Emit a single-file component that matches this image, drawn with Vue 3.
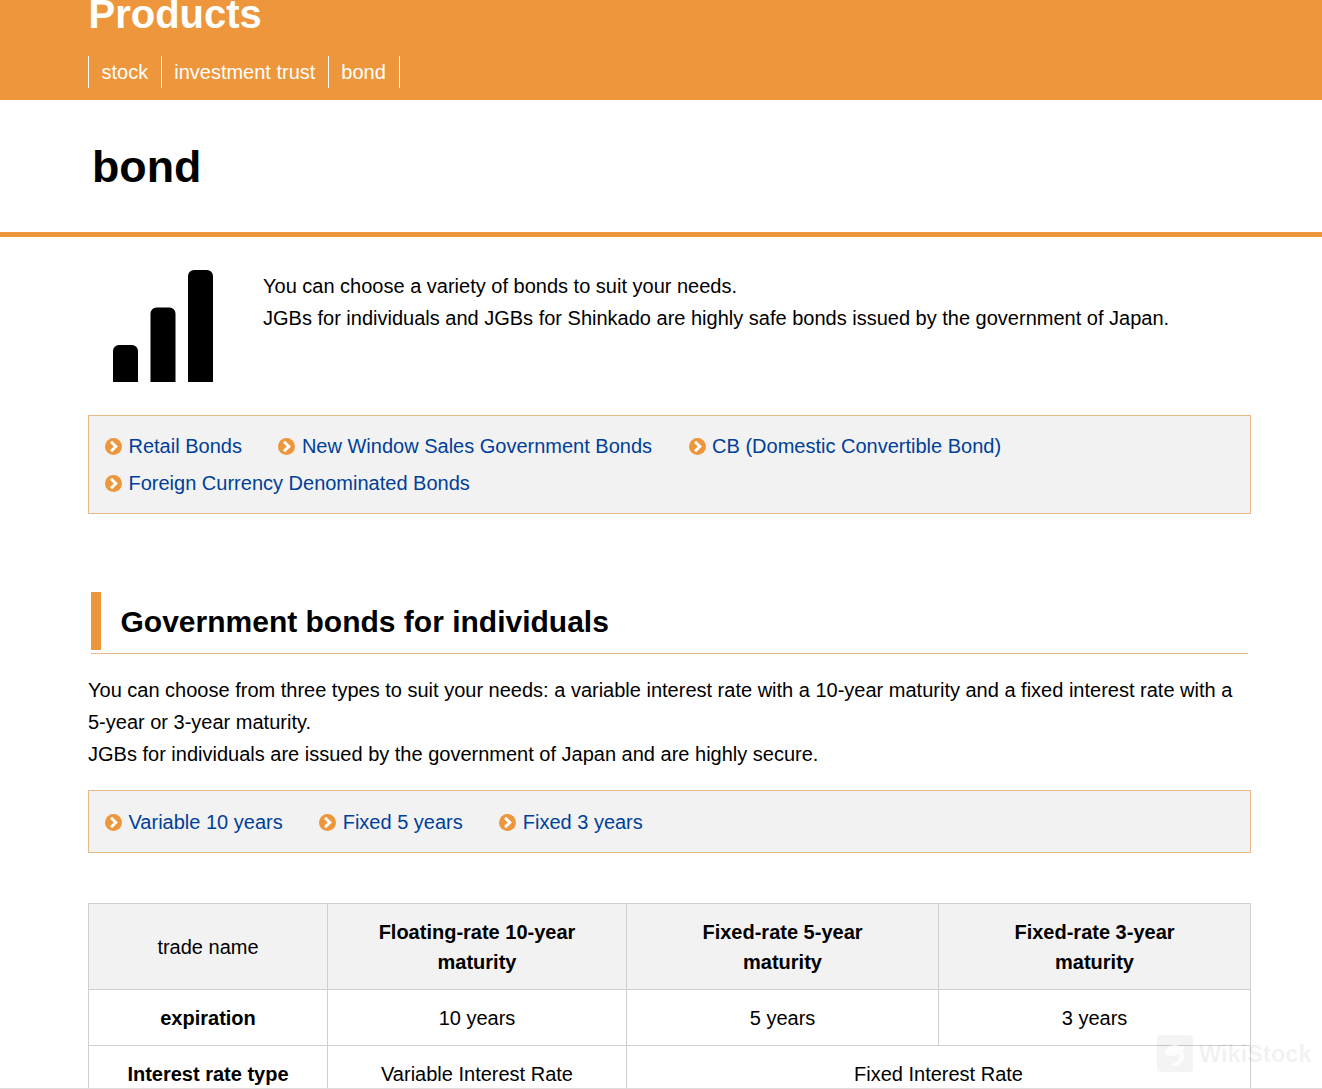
<script setup>
const topLinks = ['stock', 'investment trust', 'bond']
const mainLinks = ['Retail Bonds', 'New Window Sales Government Bonds', 'CB (Domestic Convertible Bond)', 'Foreign Currency Denominated Bonds']
const subLinks = ['Variable 10 years', 'Fixed 5 years', 'Fixed 3 years']
</script>

<template>
  <div class="page">
    <header class="band">
      <div class="band-title">Products</div>
      <ul class="top-nav">
        <li v-for="l in topLinks" :key="l">{{ l }}</li>
      </ul>
    </header>
    <section class="title-row"><h1>bond</h1></section>
    <main class="content">
      <div class="intro">
        <div class="bars" aria-hidden="true">
          <svg width="100" height="112" viewBox="0 0 100 112">
            <path d="M0 112V81a6 6 0 0 1 6-6h13a6 6 0 0 1 6 6v31zM37.500 112V43.500a6 6 0 0 1 6-6h13a6 6 0 0 1 6 6V112zM75 112V6a6 6 0 0 1 6-6h13a6 6 0 0 1 6 6v106z" fill="#000"/>
          </svg>
        </div>
        <p>You can choose a variety of bonds to suit your needs.<br>JGBs for individuals and JGBs for Shinkado are highly safe bonds issued by the government of Japan.</p>
      </div>
      <ul class="link-box first">
        <li v-for="l in mainLinks" :key="l">
          <svg class="arrow" width="17" height="17" viewBox="0 0 17 17"><circle cx="8.500" cy="8.500" r="8.500" fill="#ed963b"/><path d="M6 3.700l4.800 4.800-4.800 4.800" fill="none" stroke="#fff" stroke-width="3"/></svg>
          <a>{{ l }}</a>
        </li>
      </ul>
      <h2><span>Government bonds for individuals</span></h2>
      <p class="lead">You can choose from three types to suit your needs: a variable interest rate with a 10-year maturity and a fixed interest rate with a 5-year or 3-year maturity.<br>JGBs for individuals are issued by the government of Japan and are highly secure.</p>
      <ul class="link-box second">
        <li v-for="l in subLinks" :key="l">
          <svg class="arrow" width="17" height="17" viewBox="0 0 17 17"><circle cx="8.500" cy="8.500" r="8.500" fill="#ed963b"/><path d="M6 3.700l4.800 4.800-4.800 4.800" fill="none" stroke="#fff" stroke-width="3"/></svg>
          <a>{{ l }}</a>
        </li>
      </ul>
      <table>
        <colgroup><col class="c1"><col class="c2"><col class="c3"><col class="c4"></colgroup>
        <tbody>
          <tr class="head">
            <td>trade name</td>
            <th>Floating-rate 10-year maturity</th>
            <th>Fixed-rate 5-year maturity</th>
            <th>Fixed-rate 3-year maturity</th>
          </tr>
          <tr>
            <th>expiration</th>
            <td>10 years</td>
            <td>5 years</td>
            <td>3 years</td>
          </tr>
          <tr>
            <th>Interest rate type</th>
            <td>Variable Interest Rate</td>
            <td colspan="2">Fixed Interest Rate</td>
          </tr>
        </tbody>
      </table>
    </main>
    <div class="mark" aria-hidden="true">
      <svg width="36" height="37" viewBox="0 0 36 37"><rect width="36" height="37" rx="4" fill="rgba(0,0,0,.045)"/><path d="M8 20a10 10 0 0 1 16-8l4-1-2 5a10 10 0 0 1-8 15l-4-1 5-3a6 6 0 0 0 3-8l-5 2z" fill="#fff" fill-opacity=".75"/></svg>
      <span>WikiStock</span>
    </div>
  </div>
</template>

<style>
html, body { margin: 0; height: 1089px; overflow: hidden; background: #fff; }
</style>

<style scoped>
.page { height: 1089px; overflow: hidden; position: relative; font-family: "Liberation Sans", Arial, sans-serif; font-size: 20px; line-height: 32px; color: #000; border-bottom: 1px solid #ddd; box-sizing: border-box; }
.band { background: #ed963b; height: 100px; padding-left: 88px; box-sizing: border-box; overflow: hidden; color: #fff; }
.band-title { font-size: 40px; font-weight: 700; line-height: 40px; margin-top: -6px; height: 62px; padding-left: .5px; }
.top-nav { list-style: none; margin: 0; padding: 0; display: flex; }
.top-nav li { border-left: 1px solid #fff; padding: 0 12.500px; height: 32px; font-size: 20px; }
.top-nav li:last-child { border-right: 1px solid #fff; padding-right: 13.500px; }
.title-row { height: 137px; box-sizing: border-box; border-bottom: 5px solid #ed963b; padding: 0 0 0 92px; }
h1 { margin: 0; padding-top: 43px; font-size: 44.800px; line-height: 46px; font-weight: 700; }
.content { padding: 0 71px 0 88px; }
.intro { display: flex; padding-top: 33px; height: 145px; }
.bars { width: 175px; padding-left: 25px; box-sizing: border-box; }
.intro p { margin: 0; }
.link-box { list-style: none; margin: 0; background: #f2f2f2; border: 1px solid #e8b988; display: flex; flex-wrap: wrap; column-gap: 36.500px; row-gap: 5px; }
.link-box li { display: flex; align-items: center; gap: 6.500px; height: 32px; }
.link-box a { color: #004098; }
.first { padding: 14px 16px; }
.second { padding: 15px 16px 14px; }
.arrow { flex: none; }
h2 { margin: 78px 3px 0 3px; height: 62px; box-sizing: border-box; border-bottom: 1px solid #e6b98a; font-size: 30px; line-height: 60px; font-weight: 700; }
h2 span { display: block; height: 58px; border-left: 10px solid #ed963b; padding-left: 19.500px; }
.lead { margin: 20px 0 20px; }
table { width: 1163px; table-layout: fixed; border-collapse: collapse; margin-top: 50px; }
.c1 { width: 239px; } .c2 { width: 299px; } .c3 { width: 312px; } .c4 { width: 312px; }
td, th { border: 1px solid #cfcfcf; padding: 13px 20px 12px; text-align: center; font-size: 20px; line-height: 30px; }
th { font-weight: 700; }
.head td, .head th { background: #f2f2f2; padding-left: 40px; padding-right: 40px; }
.mark { position: absolute; left: 1157px; top: 1035px; display: flex; align-items: center; gap: 6px; font-weight: 700; font-size: 23.600px; color: rgba(0,0,0,.055); filter: blur(.5px); }
</style>
